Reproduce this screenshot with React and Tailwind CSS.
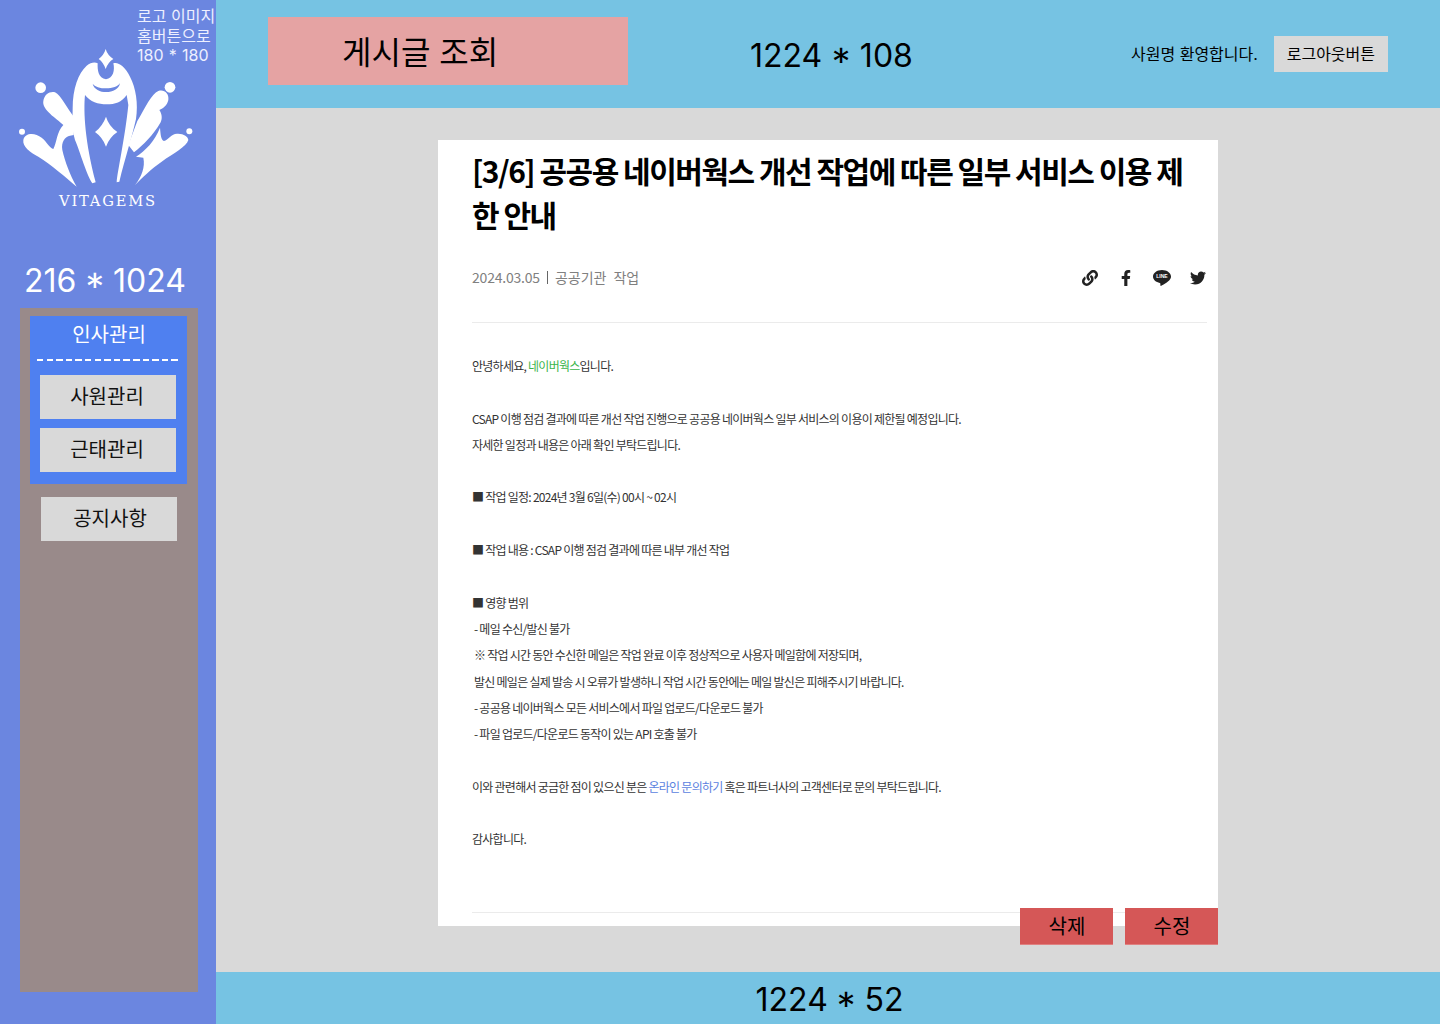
import { FaLink, FaFacebookF, FaTwitter } from 'react-icons/fa';

const KR = 'font-["Inter","Noto_Sans_CJK_KR",sans-serif]';

const BODY = [
  { t: <>안녕하세요, <span className="text-[#3bb54a]">네이버웍스</span>입니다.</> },
  null,
  { t: 'CSAP 이행 점검 결과에 따른 개선 작업 진행으로 공공용 네이버웍스 일부 서비스의 이용이 제한될 예정입니다.' },
  { t: '자세한 일정과 내용은 아래 확인 부탁드립니다.' },
  null,
  { t: '■ 작업 일정: 2024년 3월 6일(수) 00시 ~ 02시' },
  null,
  { t: '■ 작업 내용 : CSAP 이행 점검 결과에 따른 내부 개선 작업' },
  null,
  { t: '■ 영향 범위' },
  { t: '- 메일 수신/발신 불가', i: true },
  { t: '※ 작업 시간 동안 수신한 메일은 작업 완료 이후 정상적으로 사용자 메일함에 저장되며,', i: true },
  { t: '발신 메일은 실제 발송 시 오류가 발생하니 작업 시간 동안에는 메일 발신은 피해주시기 바랍니다.', i: true },
  { t: '- 공공용 네이버웍스 모든 서비스에서 파일 업로드/다운로드 불가', i: true },
  { t: '- 파일 업로드/다운로드 동작이 있는 API 호출 불가', i: true },
  null,
  { t: <>이와 관련해서 궁금한 점이 있으신 분은 <span className="text-[#5b7fe0]">온라인 문의하기</span> 혹은 파트너사의 고객센터로 문의 부탁드립니다.</> },
  null,
  { t: '감사합니다.' },
];

function Logo() {
  return (
    <svg viewBox="0 0 648 660" className="w-[216px] h-[220px]" fill="#fff">
      <g transform="translate(180 135)">
        <path d="M137 12Q142 30 160 42Q144 52 137 72Q130 52 116 42Q132 30 137 12Z" />
        <path d="M138 215Q146 243 172 261Q148 277 138 305Q128 277 105 261Q128 243 138 215Z" />
        <circle cx="330" cy="127" r="16" />
        <circle cx="388" cy="259" r="9" />
        {/* arch */}
        <path d="M97 415C80 390 60 320 45 285C35 250 38 220 38 190C38 130 55 85 80 62C92 52 105 50 113 55C112 75 115 100 138 103C160 100 165 75 160 55C175 50 195 65 210 95C228 130 235 175 228 222C215 280 195 340 178 410L170 412C172 380 195 280 205 180L200 150C185 172 165 178 140 178C115 178 90 170 75 150C70 200 75 290 107 412Z" />
        <path d="M98 116C105 150 175 150 180 114C170 135 110 135 98 116Z" fill="#6b86e0" />
        {/* right leaf */}
        <path d="M325 165C328 145 312 132 295 138C275 145 255 190 232 228L205 300L222 322C250 300 280 270 302 232C308 218 305 205 298 195C310 190 322 180 325 165Z" />
        {/* right flourish */}
        <path d="M225 420C245 395 256 365 250 338L228 335C255 318 285 288 300 248C302 270 303 285 312 288C325 285 335 265 352 266C370 265 385 275 385 285C380 305 340 325 305 350C275 370 245 400 225 420Z" />
      </g>
      <g transform="translate(45 225)">
        <circle cx="77" cy="38" r="16" />
        <circle cx="21" cy="170" r="9" />
        {/* left leaf and flourish */}
        <path d="M85 78C88 58 105 48 120 52C138 60 155 100 180 130L176 180L165 182C150 185 138 200 142 225C150 260 165 300 185 335C150 305 110 270 70 245C45 232 22 215 25 195C30 172 60 172 80 188C95 200 105 220 115 222C125 205 125 170 145 150C125 130 80 105 85 78Z" />
      </g>
      <text x="177" y="618" fontFamily="DejaVu Serif, serif" fontSize="44" textLength="288" lengthAdjust="spacing" fill="#fff">VITAGEMS</text>
    </svg>
  );
}

function Sidebar() {
  return (
    <aside className="w-[216px] shrink-0 h-full bg-[#6b86e0] flex flex-col">
      <div className="relative h-[264px] shrink-0">
        <Logo />
        <div className="absolute left-[137px] top-[7px] text-[16px] leading-[19.5px] text-[#eef0ff] whitespace-nowrap">
          로고 이미지<br />홈버튼으로<br /><span className="[word-spacing:0.8px]">180 * 180</span>
        </div>
      </div>
      <div className="h-[44px] pl-[24px] text-[32px] leading-[34px] [word-spacing:-1px] text-white whitespace-nowrap">216 * 1024</div>
      <nav className="ml-[20px] w-[178px] h-[684px] bg-[#998a8a] pt-[8px] flex flex-col">
        <div className="ml-[10px] w-[157px] h-[168px] bg-[#4f80f0] flex flex-col">
          <div className="h-[36px] pl-[1px] text-center text-[20px] leading-[39px] text-white">인사관리</div>
          <div className="mx-[7px] mt-[7px] h-[2px] bg-[repeating-linear-gradient(90deg,#fff_0,#fff_6.5px,transparent_6.5px,transparent_9.6px)]" />
          <div className="mt-[14px] ml-[10px] w-[136px] h-[44px] bg-[#d9d9d9] pr-[2px] text-[20px] leading-[44px] text-center text-[#111]">사원관리</div>
          <div className="mt-[9px] ml-[10px] w-[136px] h-[44px] bg-[#d9d9d9] pr-[2px] text-[20px] leading-[44px] text-center text-[#111]">근태관리</div>
        </div>
        <div className="mt-[13px] ml-[21px] w-[136px] h-[44px] bg-[#d9d9d9] pl-[2px] text-[20px] leading-[44px] text-center text-[#111]">공지사항</div>
      </nav>
    </aside>
  );
}

function Header() {
  return (
    <header className="h-[108px] shrink-0 bg-[#76c3e3] flex items-start text-black">
      <div className="ml-[52px] mt-[17px] w-[360px] h-[68px] bg-[#e5a3a3] pl-[74px] text-[32px] leading-[72px] whitespace-nowrap">게시글 조회</div>
      <div className="ml-[122px] mt-[36px] w-[300px] text-[32px] leading-[39px] [word-spacing:-0.5px] whitespace-nowrap">1224 * 108</div>
      <div className="ml-[81px] mt-[36px] flex items-center gap-[16px]">
        <span className="text-[16px] whitespace-nowrap">사원명 환영합니다.</span>
        <button className="w-[114px] h-[36px] bg-[#d9d9d9] text-[16px]">로그아웃버튼</button>
      </div>
    </header>
  );
}

function Article() {
  return (
    <article className="relative mt-[32px] ml-[222px] w-[780px] h-[786px] bg-white pl-[34px] pr-[11px] font-['Noto_Sans_CJK_KR',sans-serif]">
      <h1 className="pt-[8px] pr-[8px] text-[30px] leading-[44px] font-bold tracking-[-1.5px] text-black">
        [3/6] 공공용 네이버웍스 개선 작업에 따른 일부 서비스 이용 제한 안내
      </h1>
      <div className="mt-[32px] h-[20px] flex items-center justify-between text-[14px] text-[#808080]">
        <div className="flex items-center mb-[2px] whitespace-nowrap">
          <span className="tracking-[-0.2px]">2024.03.05</span>
          <span className="mx-[7px] h-[13px] border-l border-[#666]" />
          <span>공공기관</span>
          <span className="ml-[7px]">작업</span>
        </div>
        <div className="flex items-center gap-[20px] pr-[1px] text-[#222]">
          <FaLink className="w-[16px] h-[16px]" />
          <FaFacebookF className="w-[16px] h-[16px]" />
          <svg viewBox="0 0 18 16" className="w-[18px] h-[16px] -mx-[1px]">
            <path d="M9 0C4 0 0 2.9 0 6.6C0 10 3 12.3 6.8 12.9C7.6 13 7.4 14.6 7.3 15.2C7.2 15.8 7.7 16 8.3 15.7C10.3 14.7 15 12 16.6 10C17.6 8.9 18 7.9 18 6.6C18 2.9 14 0 9 0Z" fill="#222" />
            <text x="9" y="8.4" textAnchor="middle" fontSize="5" fontWeight="700" fill="#fff" fontFamily="Liberation Sans, sans-serif">LINE</text>
          </svg>
          <FaTwitter className="w-[16px] h-[16px]" />
        </div>
      </div>
      <div className="mt-[34px] border-t border-[#ebebeb]" />
      <div className="mt-[30px] text-[12px] leading-[26.3px] tracking-[-0.74px] text-[#333]">
        {BODY.map((row, i) =>
          row ? (
            <p key={i} className={row.i ? 'pl-[2px] whitespace-nowrap' : 'whitespace-nowrap'}>{row.t}</p>
          ) : (
            <div key={i} className="h-[26.3px]" />
          )
        )}
      </div>
      <div className="absolute left-[34px] right-0 top-[772px] border-t border-[#ebebeb]" />
      <div className="absolute right-0 top-[768px] flex gap-[12px]">
        <button className={`w-[93px] h-[37px] bg-[#d55757] border-b border-[#e08080] pl-[1px] pt-[2px] text-[20px] text-black ${KR}`}>삭제</button>
        <button className={`w-[93px] h-[37px] bg-[#d55757] border-b border-[#e08080] pl-[1px] pt-[2px] text-[20px] text-black ${KR}`}>수정</button>
      </div>
    </article>
  );
}

export default function App() {
  return (
    <div className={`w-[1440px] h-[1024px] flex overflow-hidden ${KR}`}>
      <Sidebar />
      <main className="flex-1 flex flex-col">
        <Header />
        <div className="flex-1 bg-[#d9d9d9]">
          <Article />
        </div>
        <footer className="h-[52px] shrink-0 bg-[#76c3e3] pl-[3px] text-center text-[32px] leading-[56px] [word-spacing:-1px] text-black">1224 * 52</footer>
      </main>
    </div>
  );
}
